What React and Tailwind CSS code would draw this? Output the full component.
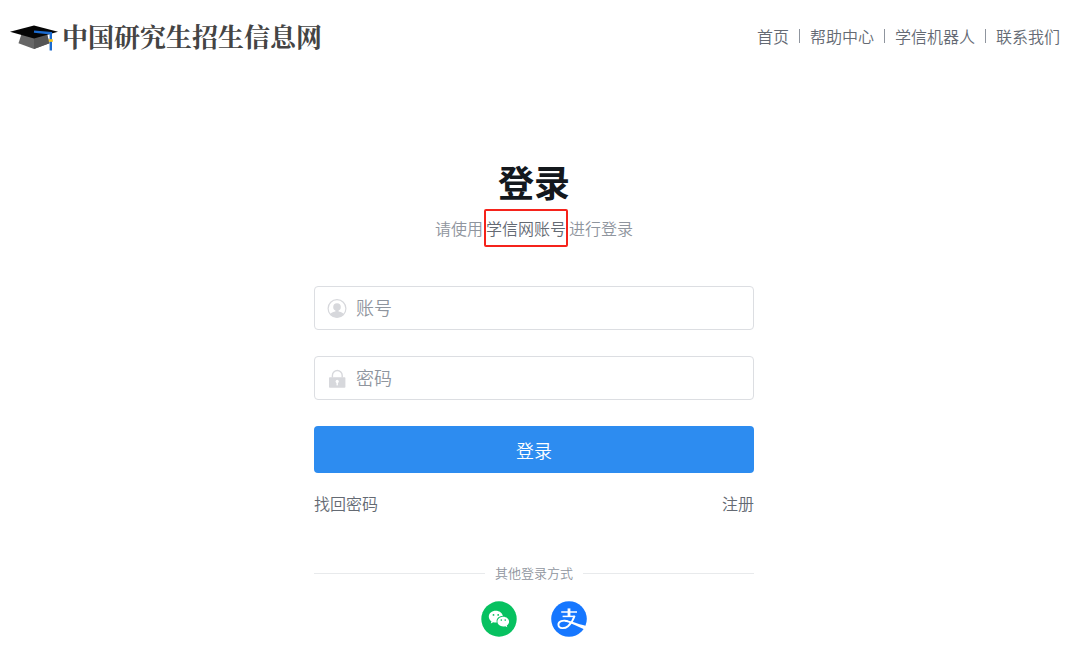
const nav_links = ['首页', '帮助中心', '学信机器人', '联系我们']

function CapLogo() {
  return (
    <svg viewBox="0 0 48 26" className="w-12 h-[26px] flex-shrink-0" aria-hidden="true">
      <path d="M11.5 9 L8.5 18.2 L24 24 L39.5 18.2 L37 9 Z" fill="#666" />
      <path d="M24 12 L37 9 L39.5 18.2 L24 24 Z" fill="#555" />
      <path d="M0 6.8 L24 0.5 L48 6.8 L24 13.4 Z" fill="#050505" />
      <path d="M24 6.6 L40.8 8.2 V25.5" fill="none" stroke="#1a6bd0" strokeWidth="2.4" />
      <rect x="38.8" y="14.2" width="4" height="2.6" fill="#f5c518" />
    </svg>
  )
}

function UserIcon() {
  return (
    <svg viewBox="0 0 20 20" className="w-5 h-5 flex-shrink-0" aria-hidden="true">
      <circle cx="10" cy="10.5" r="8.9" fill="none" stroke="#d7d8dc" strokeWidth="1.2" />
      <circle cx="10" cy="9" r="3.8" fill="#d7d8dc" />
      <path d="M3.2 16.2 C4.5 14.2 6.8 13.8 8.4 13.4 L8.6 11.5 H11.4 L11.6 13.4 C13.2 13.8 15.5 14.2 16.8 16.2 C13 20.4 7 20.4 3.2 16.2 Z" fill="#d7d8dc" />
    </svg>
  )
}

function LockIcon() {
  return (
    <svg viewBox="0 0 20 20" className="w-5 h-5 flex-shrink-0" aria-hidden="true">
      <path d="M5.4 9.5 V7.4 A4.9 4.9 0 0 1 15.2 7.4 V9.5" fill="none" stroke="#d7d8dc" strokeWidth="1.4" />
      <rect x="2" y="9.2" width="16.4" height="10.6" rx="0.8" fill="#d7d8dc" />
      <circle cx="10.2" cy="13.4" r="1.6" fill="#fff" />
      <rect x="9.5" y="13.6" width="1.4" height="3.8" fill="#fff" />
    </svg>
  )
}

function WechatIcon() {
  return (
    <svg viewBox="0 0 36 36" className="w-9 h-9" aria-hidden="true">
      <circle cx="18" cy="18" r="17.7" fill="#07c160" />
      <path d="M14.8 9.8 C10.8 9.8 7.8 12.4 7.8 15.7 C7.8 17.6 8.8 19.2 10.4 20.3 L9.8 22.4 L12.2 21.2 C13.4 21.5 14.5 21.6 15.8 21.5 C14.8 17.6 18 14.9 21.8 15 C21.3 12 18.4 9.8 14.8 9.8 Z" fill="#fff" />
      <path d="M22.2 15.7 C18.9 15.7 16.4 17.9 16.4 20.6 C16.4 23.4 18.9 25.5 22.2 25.5 C22.9 25.5 23.6 25.4 24.3 25.2 L26.3 26.2 L25.8 24.5 C27.2 23.6 28.1 22.2 28.1 20.6 C28.1 17.9 25.5 15.7 22.2 15.7 Z" fill="#fff" />
      <g fill="#07c160">
        <circle cx="12.5" cy="13.9" r="0.9" />
        <circle cx="17.2" cy="13.9" r="0.9" />
        <circle cx="20.3" cy="19.1" r="0.8" />
        <circle cx="24.2" cy="19.1" r="0.8" />
      </g>
    </svg>
  )
}

function AlipayIcon() {
  return (
    <svg viewBox="0 0 36 36" className="w-9 h-9" aria-hidden="true">
      <circle cx="18" cy="18" r="17.8" fill="#1677ff" />
      <g fill="none" stroke="#fff">
        <path d="M18 7.4 V15.4" strokeWidth="2.8" />
        <path d="M10.2 11 H26" strokeWidth="1.5" />
        <path d="M11.6 15.4 H23.8" strokeWidth="1.5" />
        <path d="M23.6 14.8 C22.4 18.6 20 22.6 17 25.2 C14.2 27.6 7.6 28.4 7.4 23.8 C7.3 20.2 12 18.8 16.5 20.2" strokeWidth="1.9" />
      </g>
      <path d="M13.5 18.8 C19 19.4 26 22.8 35.4 25 L33.6 28.4 C26.8 26.2 20.6 22 13.8 20.6 Z" fill="#fff" />
    </svg>
  )
}

function Field({ id, type, label, icon }) {
  return (
    <label htmlFor={id} className="flex items-center gap-[9px] h-11 px-3 border border-[#dcdee2] rounded">
      {icon}
      <input
        id={id}
        type={type}
        placeholder={label}
        aria-label={label}
        className="flex-1 min-w-0 pb-0.5 text-lg outline-none bg-transparent placeholder:text-[#8f959e]"
      />
    </label>
  )
}

export default function App() {
  return (
    <div className="bg-white text-[#646a73] font-[350]
                    font-['Noto_Sans_CJK_SC','Liberation_Sans',sans-serif]">

      <header className="flex items-center justify-between pl-2.5 pr-5 pt-[18px]">
        <a href="#" className="flex items-center gap-1">
          <div className="pt-1"><CapLogo /></div>
          <span className="text-[26px] leading-9 font-bold text-[#444]
                           font-['Noto_Serif_CJK_SC','Noto_Sans_CJK_SC',serif]">
            中国研究生招生信息网
          </span>
        </a>
        <nav className="flex items-center text-base">
          {nav_links.map((name, i) => (
            <div key={name} className="flex items-center">
              {i > 0 && <span className="w-px h-3.5 mx-2.5 bg-[#8f959e]" />}
              <a href="#">{name}</a>
            </div>
          ))}
        </nav>
      </header>

      <main className="pr-3 pt-20">
        <div className="w-full max-w-[440px] mx-auto">
          <h1 className="pt-5 text-4xl leading-[54px] font-bold text-center text-[#14181d]">登录</h1>

          <p className="flex justify-center gap-[3px] text-base text-[#8f959e] mt-2">
            请使用
            <a href="#" className="relative text-[#646a73]">
              学信网账号
              {/* Highlight frame */}
              <span className="absolute -inset-x-0.5 -inset-y-[7px] border-2 border-[#f5231b] rounded-xs" />
            </a>
            进行登录
          </p>

          <form className="mt-[46px]" onSubmit={(e) => e.preventDefault()}>
            <div className="flex flex-col gap-[26px]">
              <Field id="account" type="text" label="账号" icon={<UserIcon />} />
              <Field id="password" type="password" label="密码" icon={<LockIcon />} />
              <button type="submit" className="h-[47px] rounded bg-[#2d8cf0] text-white text-lg">
                登录
              </button>
            </div>
            <div className="flex justify-between mt-[18px] text-base">
              <a href="#">找回密码</a>
              <a href="#">注册</a>
            </div>
          </form>

          <div className="flex items-center gap-2.5 mt-12 text-[13px] leading-5 text-[#8f959e]">
            <span className="flex-1 h-px bg-[#e8eaec]" />
            其他登录方式
            <span className="flex-1 h-px bg-[#e8eaec]" />
          </div>

          <div className="flex justify-center gap-[34px] mt-[18px]">
            <a href="#" aria-label="微信登录"><WechatIcon /></a>
            <a href="#" aria-label="支付宝登录"><AlipayIcon /></a>
          </div>
        </div>
      </main>
    </div>
  )
}
